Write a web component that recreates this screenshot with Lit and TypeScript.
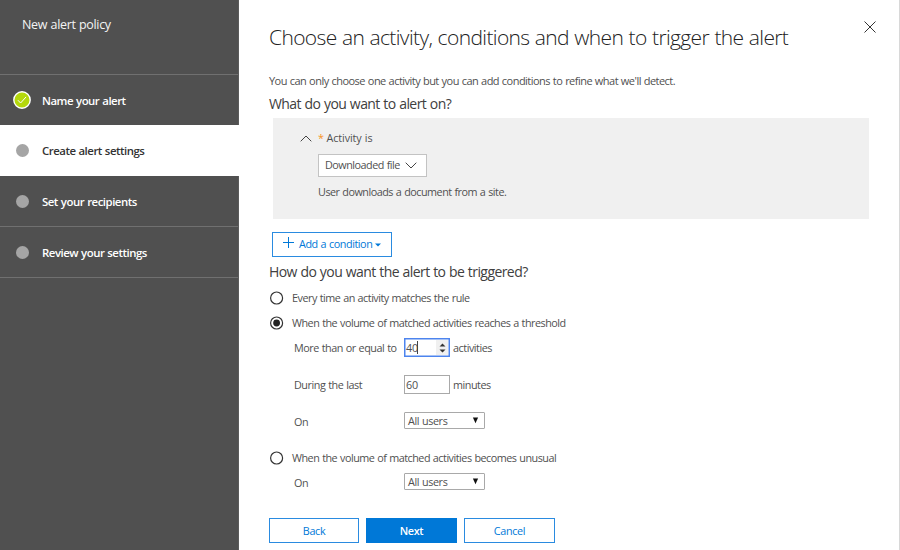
import { LitElement, html, css, svg } from "lit";
import { customElement, property } from "lit/decorators.js";

const check = html`<svg class="check" viewBox="0 0 18 18" width="18" height="18">
  <circle cx="9" cy="9" r="8.2" fill="#b4d80c" stroke="#fff" stroke-width="1.4"></circle>
  <path d="M4.9 9.2 7.6 12 13.1 5.9" fill="none" stroke="#fff" stroke-width="1"></path>
</svg>`;

const chevron = (up: boolean) => html`<svg viewBox="0 0 12 7" width="12" height="7">
  ${up
    ? svg`<path d="M.7 6.3 6 1 11.3 6.3" fill="none" stroke="#444" stroke-width="1"></path>`
    : svg`<path d="M.7.7 6 6 11.3.7" fill="none" stroke="#444" stroke-width="1"></path>`}
</svg>`;

@customElement("wizard-step")
class WizardStep extends LitElement {
  @property() label = "";
  @property({ type: Boolean, reflect: true }) done = false;
  @property({ type: Boolean, reflect: true }) current = false;
  static styles = css`
    :host { display: flex; align-items: center; box-sizing: border-box; height: 51px; padding-left: 13px;
      border-bottom: 1px solid #707070; color: #fff; font-weight: 600; font-size: 11.4px; letter-spacing: -0.48px; }
    :host([current]) { background: #fff; color: #333; border-color: #fff; }
    :host([done]) { height: 50px; border-bottom: 0; }
    .mark { display: flex; justify-content: center; width: 18px; margin-right: 11px; }
    .dot { width: 13px; height: 13px; border-radius: 50%; background: #a5a5a5; }
    .check { display: block; }
    .label { line-height: 18px; padding-top: 2px; white-space: nowrap; }
  `;
  render() {
    return html`<span class="mark">${this.done ? check : html`<span class="dot"></span>`}</span>
      <span class="label">${this.label}</span>`;
  }
}

@customElement("radio-row")
class RadioRow extends LitElement {
  @property({ type: Boolean }) checked = false;
  static styles = css`
    :host { display: flex; align-items: center; height: 16px; padding-left: 1px; line-height: 16px; white-space: nowrap; }
    svg { display: block; margin-right: 8px; flex: none; }
  `;
  render() {
    return html`<svg width="14" height="14" viewBox="0 0 14 14">
        <circle cx="6.6" cy="7" r="6" fill="#fff" stroke="#333" stroke-width="1.2"></circle>
        ${this.checked ? svg`<circle cx="6.6" cy="7" r="3.4" fill="#222"></circle>` : null}
      </svg><slot></slot>`;
  }
}

@customElement("app-root")
class AppRoot extends LitElement {
  static styles = css`
    :host { display: flex; width: 900px; height: 550px; overflow: hidden; background: #fff; color: #505050;
      font: 10.8px/16px "Open Sans", "Noto Sans", sans-serif; letter-spacing: -0.49px; word-spacing: 0.5px; }
    * { box-sizing: border-box; }
    svg { display: block; flex: none; }
    nav { width: 239px; background: #505050; border-right: 1px solid #5c5c5c; flex: none; }
    nav wizard-step[current] { margin-right: -1px; }
    .brand { height: 75px; padding: 15px 0 0 22px; border-bottom: 1px solid #707070; color: #f4f4f4;
      font-size: 12.5px; line-height: 19px; letter-spacing: -0.33px; white-space: nowrap; }
    main { flex: 1; padding-left: 30px; border-right: 1px solid #d8d8d8; white-space: nowrap; }
    .top { display: flex; justify-content: space-between; height: 73px; padding: 21px 23px 0 0; }
    h1 { margin: 0; font-size: 21px; line-height: 32px; font-weight: 300; color: #222; letter-spacing: -0.63px; }
    h2 { margin: 0; font-size: 14px; line-height: 20px; font-weight: 400; color: #404040; letter-spacing: -0.57px; }
    .intro { height: 21px; font-size: 11px; letter-spacing: -0.53px; }
    .panel { width: 596px; height: 101px; margin: 4px 0 13px 4px; padding: 12px 0 0 27px; background: #f0f0f0; }
    .line { display: flex; align-items: center; }
    .star { color: #f7921e; margin: 0 3px 0 6px; }
    .act { letter-spacing: -0.1px; }
    .body { padding-left: 18px; }
    .pick { display: flex; align-items: center; width: 109px; height: 23px; margin: 8px 0 7px; padding: 0 0 1px 6px;
      gap: 5px; background: #fff; border: 1px solid #c3c3c3; }
    .add { display: flex; align-items: center; width: 120px; height: 25px; margin: 0 0 5px 3px; padding: 0 0 1px 10px;
      border: 1px solid #2a8be0; color: #0078d7; letter-spacing: -0.44px; }
    .add svg.plus { margin: -3px 5px 0 0; }
    .add svg.caret { margin: 2px 0 0 3px; }
    .r1 { margin-top: 8px; }
    .r2 { margin-top: 9px; }
    .field { display: flex; align-items: center; padding-left: 25px; }
    .name { width: 110px; padding-top: 1px; }
    .wide { letter-spacing: -0.46px; }
    .low { padding-top: 3px; }
    .num { display: flex; align-items: center; width: 46px; height: 19px; margin-right: 3px; padding-left: 1px; border: 1px solid #a9a9a9; letter-spacing: -0.2px; }
    .focus { border: 1px solid #4d84ee; box-shadow: inset 0 0 0 .5px #4d84ee; }
    .cursor { width: 1px; height: 13px; margin-left: -1px; background: #444; }
    .spin { display: flex; align-items: center; justify-content: center; width: 12px; height: 15px; margin: 0 1px 0 auto; background: #f0f0f0; }
    .sel { display: flex; align-items: center; justify-content: space-between; width: 81px; height: 17px; padding: 0 5px 0 3px; border: 1px solid #a9a9a9; border-radius: 1px; letter-spacing: -0.4px; }
    .a { height: 19px; margin-top: 7px; }
    .b { height: 19px; margin-top: 18px; }
    .c { height: 17px; margin-top: 18px; }
    .r3 { margin-top: 21px; }
    .d { height: 17px; margin-top: 7px; }
    footer { display: flex; gap: 7px; margin-top: 28px; }
    .btn { display: flex; align-items: center; justify-content: center; width: 91px; height: 25px; border: 1px solid #2a8be0; color: #0078d7; letter-spacing: -0.35px; }
    .btn.first { width: 90px; }
    .btn.primary { background: #0078d7; border-color: #0078d7; color: #fff; font-weight: 600; }
  `;
  select() {
    return html`<div class="sel">All users<svg width="7" height="7" viewBox="0 0 7 7"><path d="M.9.5h5.2L3.5 6.2z" fill="#111"></path></svg></div>`;
  }
  render() {
    return html`
      <nav>
        <div class="brand">New alert policy</div>
        <wizard-step done label="Name your alert"></wizard-step>
        <wizard-step current label="Create alert settings"></wizard-step>
        <wizard-step label="Set your recipients"></wizard-step>
        <wizard-step label="Review your settings"></wizard-step>
      </nav>
      <main>
        <div class="top">
          <h1>Choose an activity, conditions and when to trigger the alert</h1>
          <svg width="12" height="12" viewBox="0 0 12 12"><path d="M.5.5l11 11M11.5.5l-11 11" stroke="#333" stroke-width="1"></path></svg>
        </div>
        <div class="intro">You can only choose one activity but you can add conditions to refine what we'll detect.</div>
        <h2>What do you want to alert on?</h2>
        <div class="panel">
          <div class="line">${chevron(true)}<span class="star">*</span><span class="act">Activity is</span></div>
          <div class="body">
            <div class="pick"><span>Downloaded file</span>${chevron(false)}</div>
            <div>User downloads a document from a site.</div>
          </div>
        </div>
        <div class="add">
          <svg class="plus" width="11" height="11" viewBox="0 0 11 11"><path d="M5.5 0v11M0 5.5h11" stroke="#0078d7" stroke-width="1"></path></svg>
          <span>Add a condition</span>
          <svg class="caret" width="6" height="4" viewBox="0 0 6 4"><path d="M0 .4h6L3 3.6z" fill="#0078d7"></path></svg>
        </div>
        <h2>How do you want the alert to be triggered?</h2>
        <radio-row class="r1">Every time an activity matches the rule</radio-row>
        <radio-row class="r2" checked>When the volume of matched activities reaches a threshold</radio-row>
        <div class="field a"><span class="name wide">More than or equal to</span>
          <div class="num focus">40<i class="cursor"></i><span class="spin"><svg width="7" height="10" viewBox="0 0 7 10"><path d="M.5 3.4h6L3.5.4zM.5 6.6h6l-3 3z" fill="#333"></path></svg></span></div><span class="wide">activities</span></div>
        <div class="field b"><span class="name wide">During the last</span><div class="num">60</div><span class="wide">minutes</span></div>
        <div class="field c"><span class="name low">On</span>${this.select()}</div>
        <radio-row class="r3">When the volume of matched activities becomes unusual</radio-row>
        <div class="field d"><span class="name low">On</span>${this.select()}</div>
        <footer><div class="btn first">Back</div><div class="btn primary">Next</div><div class="btn">Cancel</div></footer>
      </main>`;
  }
}
